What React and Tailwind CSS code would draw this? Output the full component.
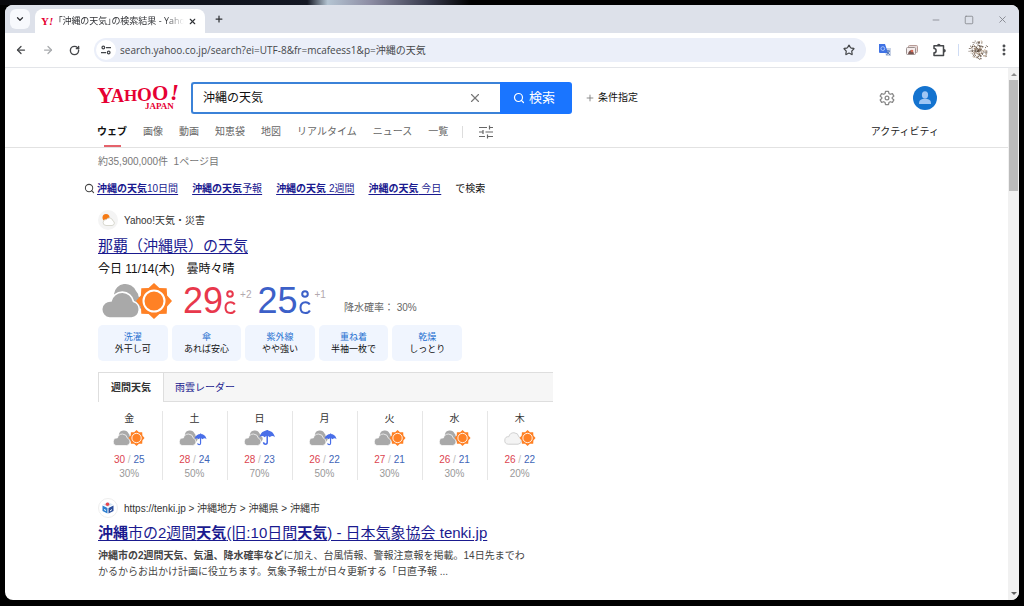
import React from "react";
import { ArrowLeft, ArrowRight, ChevronDown, EllipsisVertical, Minus, Plus, RotateCw, Search, Square, Star, X } from "lucide-react";

const navItems = ["画像", "動画", "知恵袋", "地図", "リアルタイム", "ニュース", "一覧"];

const suggestions = ["10日間", "予報", " 2週間", " 今日"];

const indexes = [
  ["洗濯", "外干し可"],
  ["傘", "あれば安心"],
  ["紫外線", "やや強い"],
  ["重ね着", "半袖一枚で"],
  ["乾燥", "しっとり"],
];

const week = [
  { day: "金", icon: "sun", hi: 30, lo: 25, rain: "30%" },
  { day: "土", icon: "drizzle", hi: 28, lo: 24, rain: "50%" },
  { day: "日", icon: "rain", hi: 28, lo: 23, rain: "70%" },
  { day: "月", icon: "drizzle", hi: 26, lo: 22, rain: "50%" },
  { day: "火", icon: "sun", hi: 27, lo: 21, rain: "30%" },
  { day: "水", icon: "sun", hi: 26, lo: 21, rain: "30%" },
  { day: "木", icon: "fair", hi: 26, lo: 22, rain: "20%" },
];

const sunPoints = Array.from({ length: 16 }, (_, i) => {
  const r = i % 2 ? 14.2 : 18;
  const a = (i * Math.PI) / 8;
  return `${(52 + r * Math.cos(a)).toFixed(1)},${(18 + r * Math.sin(a)).toFixed(1)}`;
}).join(" ");

// Deterministic noise, so that the avatar speckles are the same on every render.
const noise = (n) => {
  const v = Math.sin(n * 127.1) * 43758.5453;
  return v - Math.floor(v);
};

function Umbrella({ transform }) {
  return (
    <g transform={transform}>
      <path d="M0 14C2 5 8 1 15 1s13 4 15 13c-3-3-7-3-10 0-3-3-7-3-10 0-3-3-7-3-10 0z" fill="#4a6fe8" />
      <path d="M15 0v24c0 5-7 5-7 0" fill="none" stroke="#4a6fe8" strokeWidth="3" />
    </g>
  );
}

function WeatherIcon({ type, className }) {
  const fair = type === "fair";
  return (
    <svg viewBox="0 0 70 36" className={className} aria-hidden="true">
      {!fair && <path d="M20 27h15a7 7 0 0 0 1.5-13.5A9 9 0 0 0 34 8 11.5 11.5 0 0 0 12 11z" fill="#a9a9a9" />}
      <path
        d="M7.500 35h22a8.500 8.500 0 0 0 2-16.500A11.500 11.500 0 0 0 9 18 8.500 8.500 0 0 0 7.500 35z"
        fill={fair ? "#f4f4f4" : "#a9a9a9"}
        stroke={fair ? "#cccccc" : "#ffffff"}
        strokeWidth={fair ? 2 : 1.6}
        transform={fair ? "translate(1 -3)" : undefined}
      />
      {(type === "sun" || fair) && (
        <>
          <polygon points={sunPoints} fill="#ff8125" />
          <circle cx="52" cy="18" r="10.500" fill="none" stroke="#fff" strokeWidth="2" />
        </>
      )}
      {type === "drizzle" && <Umbrella transform="translate(34 8) scale(.9)" />}
      {type === "rain" && <Umbrella transform="translate(34 0) scale(1.150)" />}
    </svg>
  );
}

function YahooLogo() {
  return (
    <svg viewBox="0 0 82 26" className="h-[26px] w-[82px] overflow-visible" role="img" aria-label="Yahoo! JAPAN" fill="#e60033" fontFamily="Liberation Serif, serif" fontWeight="bold">
      <text y="19" fontSize="23">
        <tspan x="0">Y</tspan>
        <tspan x="14" y="18" fontSize="18">A</tspan>
        <tspan x="27" y="17" fontSize="17">H</tspan>
        <tspan x="40" y="17" fontSize="19">O</tspan>
        <tspan x="55" y="16" fontSize="21">O</tspan>
        <tspan x="73" y="16" fontSize="23" fontStyle="italic">!</tspan>
        <tspan x="48" y="25" fontSize="9">JAPAN</tspan>
      </text>
    </svg>
  );
}

function SlidersIcon({ className, viewBox = "0 0 14 14", children }) {
  return (
    <svg viewBox={viewBox} className={className} fill="none" stroke="currentColor" aria-hidden="true">
      {children}
    </svg>
  );
}

function BrowserTabs() {
  return (
    <div className="flex h-7 items-end bg-[#dde1ea] pl-[5px] text-[#303236]">
      <button aria-label="タブを検索" className="mb-1 grid size-5 place-items-center rounded-md bg-[#f7f9fd]">
        <ChevronDown className="size-[10px]" strokeWidth={3} />
      </button>
      <div className="ml-[5px] flex h-6 w-[170px] items-center rounded-t-lg bg-white pl-[6px] pr-2">
        <svg viewBox="0 0 12 10" className="h-[10px] w-3 shrink-0 overflow-visible" fill="#e60033" fontFamily="Liberation Serif, serif" fontWeight="bold" aria-hidden="true">
          <text x="0" y="9" fontSize="11">Y<tspan fontStyle="italic">!</tspan></text>
        </svg>
        <span className="ml-[5px] min-w-0 flex-1 overflow-hidden whitespace-nowrap font-['Open_Sans','Noto_Sans_CJK_JP',sans-serif] text-[9px] [font-feature-settings:'palt'] [mask-image:linear-gradient(to_right,black_86%,transparent)]">
          「沖縄の天気」の検索結果 - Yahoo!検索
        </span>
        <button aria-label="タブを閉じる" className="ml-1 shrink-0"><X className="size-[9px]" strokeWidth={3} /></button>
      </div>
      <button aria-label="新しいタブ" className="mb-[9px] ml-[9px]"><Plus className="size-[10px]" strokeWidth={3} /></button>
      <div className="mb-2 ml-auto mr-[11px] flex gap-[23px] text-[#85888e]">
        <button aria-label="最小化"><Minus className="size-[10px]" /></button>
        <button aria-label="最大化"><Square className="size-[10px]" /></button>
        <button aria-label="閉じる"><X className="size-[11px]" /></button>
      </div>
    </div>
  );
}

function Toolbar() {
  return (
    <div className="flex h-[35px] items-center border-b border-[#e3e5e9] bg-white pl-[10px] pr-2 text-[#45474a]">
      <div className="flex w-[79px] shrink-0 gap-[15px]">
        <button aria-label="戻る"><ArrowLeft className="size-3" strokeWidth={2.5} /></button>
        <button aria-label="進む" className="text-[#a9abae]"><ArrowRight className="size-3" strokeWidth={2.5} /></button>
        <button aria-label="再読み込み"><RotateCw className="size-[11px]" strokeWidth={3} /></button>
      </div>
      <div className="flex h-6 flex-1 items-center rounded-full bg-[#ebeff9] pl-[2px] pr-[11px]">
        <button aria-label="サイト情報" className="grid size-5 place-items-center rounded-full bg-white">
          <SlidersIcon className="size-[10px]" viewBox="0 0 12 12">
            <g strokeWidth="1.500">
              <circle cx="2.800" cy="3" r="1.600" /><path d="M6 3h6M0 9h6" /><circle cx="9.200" cy="9" r="1.600" />
            </g>
          </SlidersIcon>
        </button>
        <input aria-label="アドレス" defaultValue="search.yahoo.co.jp/search?ei=UTF-8&fr=mcafeess1&p=沖縄の天気" className="ml-1 min-w-0 flex-1 bg-transparent font-['Open_Sans','Noto_Sans_CJK_JP',sans-serif] text-[10px] outline-none" />
        <button aria-label="ブックマーク"><Star className="size-3" strokeWidth={2.4} /></button>
      </div>
      <div className="ml-[13px] flex items-center">
        <button aria-label="翻訳">
          <svg viewBox="0 0 12 12" className="size-3">
            <path d="M5 4h7v8H7z" fill="#c9d3e6" />
            <path d="M0 0h6l3 9H1a1 1 0 0 1-1-1z" fill="#3f72e4" />
            <circle cx="3.800" cy="4.600" r="1.900" fill="none" stroke="#a9c5fa" strokeWidth="1" />
            <path d="M7 7h4M9 6v1m1.500 0L7.500 11M8 8l3 3" stroke="#4b72b8" strokeWidth=".9" />
          </svg>
        </button>
        <button aria-label="画像検索" className="ml-[15px]">
          <svg viewBox="0 0 12 12" className="size-3">
            <rect x="2.500" y="1.500" width="9" height="7" rx="1" fill="#e9dcda" stroke="#b79b96" />
            <rect x=".5" y="3.500" width="9" height="7" rx="1" fill="#f6eeee" stroke="#9c918f" />
            <path d="M2 10c1-5 5-5 6 0z" fill="#775450" />
            <circle cx="6" cy="7" r="1.300" fill="#d46753" />
          </svg>
        </button>
        <button aria-label="拡張機能" className="ml-[14px]">
          <svg viewBox="0 0 14 14" className="size-[14px]" fill="none" stroke="currentColor" strokeWidth="1.500" strokeLinejoin="round">
            <path d="M2 2.800h9.500v9.700H2V9.800a2 2 0 0 0 0-4.200z" />
            <path d="M5 2.500a1.800 1.800 0 0 1 3.600 0zM12 6a1.800 1.800 0 0 1 0 3.600z" fill="currentColor" stroke="none" />
          </svg>
        </button>
        <span className="ml-3 h-3 w-px bg-[#cfdcf4]" />
        <button aria-label="プロフィール" className="ml-[9px]">
          <svg viewBox="0 0 20 20" className="size-5">
            {Array.from({ length: 190 }, (_, i) => {
              const r = noise(i + 1) * 10;
              const a = noise(i + 501) * Math.PI * 2;
              return <rect key={i} x={10 + r * Math.cos(a)} y={10 + r * Math.sin(a)} width={0.9} height={0.9} fill={i % 3 ? "#5b4a3c" : "#b9a189"} />;
            })}
          </svg>
        </button>
        <button aria-label="メニュー" className="ml-[9px]"><EllipsisVertical className="size-[14px]" strokeWidth={3} /></button>
      </div>
    </div>
  );
}

function SearchHeader() {
  return (
    <header className="flex justify-between border-b border-[#e2e2e2] pl-[92px] pr-[69px] pt-[14px]">
      <div>
        <div className="flex h-[31px] items-center">
          <a href="#home" className="-mt-px"><YahooLogo /></a>
          <form className="ml-3 flex h-8 w-[381px]" onSubmit={(e) => e.preventDefault()}>
            <div className="flex flex-1 items-center rounded-l-[3px] border-2 border-r-0 border-[#3b82d8] pl-[10px] pr-[18px]">
              <input aria-label="検索キーワード" defaultValue="沖縄の天気" className="min-w-0 flex-1 text-[12px] text-[#111] outline-none" />
              <button type="button" aria-label="クリア" className="text-[#777]"><X className="size-[14px]" strokeWidth={2} /></button>
            </div>
            <button type="submit" className="flex w-[72px] items-center justify-center gap-1 rounded-r-[3px] bg-[#1a75ff] pr-1 text-[13px] text-white">
              <Search className="size-3" strokeWidth={2.4} />検索
            </button>
          </form>
          <button className="ml-[13px] flex items-center gap-[3px] text-[10px] text-[#111]">
            <Plus className="size-[10px] text-[#777]" strokeWidth={2} />条件指定
          </button>
        </div>
        <nav className="flex h-[34px] gap-4 text-[10px] leading-[38px] text-[#666]">
          <a href="#web" aria-current="page" className="flex flex-col items-center font-bold text-[#111]">
            <span className="h-8">ウェブ</span>
            <span className="h-0.5 w-[17px] bg-[#e5626b]" />
          </a>
          {navItems.map((item) => <a key={item} href="#search">{item}</a>)}
          <span className="-ml-0.5 mt-[13px] h-3 w-px bg-[#ddd]" />
          <button aria-label="検索ツール" className="h-[38px]">
            <SlidersIcon className="size-[14px]">
              <path d="M0 2.500h8M10.500 2.500H14M10.500 .5v4M0 7h4M6.500 7H14M4 5v4M0 11.500h6M8.500 11.500H14M8.500 9.500v4" strokeWidth="1.200" />
            </SlidersIcon>
          </button>
        </nav>
      </div>
      <div className="flex flex-col items-end">
        <div className="flex h-[31px] items-center gap-[18px] pr-0.5">
          <button aria-label="設定" className="text-[#888]">
            <svg viewBox="0 0 24 24" className="size-4" fill="none" stroke="currentColor" strokeWidth="1.900" strokeLinejoin="round">
              <path d="M9.800 2h4.400l.7 3.200 2 1.200 3.200-1 2.200 3.800-2.500 2.200v1.200l2.500 2.200-2.200 3.800-3.200-1-2 1.200-.7 3.200H9.800l-.7-3.200-2-1.200-3.200 1-2.200-3.800 2.500-2.200v-1.200L1.700 9.200l2.200-3.800 3.200 1 2-1.200z" />
              <circle cx="12" cy="12" r="2.800" />
            </svg>
          </button>
          <button aria-label="アカウント">
            <svg viewBox="0 0 24 24" className="size-6">
              <circle cx="12" cy="12" r="12" fill="#1473cf" />
              <ellipse cx="12" cy="9" rx="3.100" ry="3.700" fill="#9fc6f4" />
              <path d="M6 18c0-5 3-5 6-5s6 0 6 5z" fill="#9fc6f4" />
            </svg>
          </button>
        </div>
        <a href="#activity" className="h-[34px] text-[10px] leading-[38px] text-[#222]">アクティビティ</a>
      </div>
    </header>
  );
}

function Temperature({ value, diff, className }) {
  return (
    <div className={`flex h-9 items-center text-[36px] leading-9 ${className}`}>
      {value}
      <svg viewBox="0 0 12 26" className="ml-px mt-px h-[26px] w-3" fill="none" stroke="currentColor" strokeWidth="2" role="img" aria-label="度">
        <circle cx="6" cy="5" r="2.800" />
        <path d="M10.700 15.500C9.800 13.800 8.300 13.300 6.500 13.300 3.300 13.300 1.500 15.500 1.500 18.800s1.800 5.200 5 5.200c2 0 3.600-.8 4.400-2.500" />
      </svg>
      <span className="ml-1 self-start pt-1 text-[10px] leading-4 text-[#b3a9ae]">{diff}</span>
    </div>
  );
}

function WeatherResult() {
  return (
    <section>
      <div className="mt-[14px] flex h-5 items-center gap-[6px] text-[10px] text-[#333]">
        <span className="grid size-5 place-items-center rounded-full bg-[#f4f4f4]">
          <svg viewBox="0 0 14 14" className="size-[14px]" aria-hidden="true">
            <circle cx="5" cy="4.500" r="3.500" fill="#f57a14" />
            <path d="M5 12.500a3 3 0 0 1 .3-6 3.600 3.600 0 0 1 6.500 1.200A2.500 2.500 0 0 1 11 12.500z" fill="#fff" stroke="#cfcfc4" strokeWidth=".8" />
          </svg>
        </span>
        Yahoo!天気・災害
      </div>
      <h2 className="mt-1 h-6 text-[15px] leading-6 text-[#1a1a8f]"><a href="#naha" className="underline underline-offset-2">那覇（沖縄県）の天気</a></h2>
      <p className="mt-[3px] h-4 text-[12px] leading-4 text-[#111]">今日 11/14(木)　曇時々晴</p>

      <div className="mt-[6px] flex h-9">
        <WeatherIcon type="sun" className="ml-1 h-9 w-[70px]" />
        <Temperature value="29" diff="+2" className="ml-[11px] text-[#e8384c]" />
        <Temperature value="25" diff="+1" className="ml-[6px] text-[#3c60c8]" />
        <p className="ml-[18px] pt-[17px] text-[10px] leading-4 text-[#666]">降水確率： 30%</p>
      </div>

      <ul className="mt-[6px] grid w-[364px] grid-cols-5 gap-1 text-center text-[9px] leading-3">
        {indexes.map(([label, value]) => (
          <li key={label} className="rounded-[5px] bg-[#f0f5fe] py-[6px]">
            <a href="#index" className="block text-[#1f70d0]">{label}</a>
            <span className="block text-[#111]">{value}</span>
          </li>
        ))}
      </ul>

      <div role="tablist" className="mt-[11px] flex h-[30px] w-[455px] border-y border-[#dedede] bg-[#f6f6f6] text-[10px]">
        <button role="tab" aria-selected="true" className="-mb-px w-[66px] border-x border-[#dedede] bg-white font-bold text-[#333]">週間天気</button>
        <button role="tab" aria-selected="false" className="px-[11px] text-[#1a1a8f]">雨雲レーダー</button>
      </div>

      <table className="-ml-px mt-[9px] w-[455px] table-fixed border-collapse text-center text-[10px]">
        <thead>
          <tr className="divide-x divide-[#e6e6e6]">
            {week.map((d) => <th key={d.day} scope="col" className="h-4 font-normal leading-4 text-[#333]">{d.day}</th>)}
          </tr>
        </thead>
        <tbody>
          <tr className="divide-x divide-[#e6e6e6]">
            {week.map((d) => <td key={d.day} className="pb-[7px] pt-[3px]"><WeatherIcon type={d.icon} className="mx-auto h-4 w-8" /></td>)}
          </tr>
          <tr className="divide-x divide-[#e6e6e6]">
            {week.map((d) => (
              <td key={d.day} className="leading-[14px] text-[#bbb]">
                <span className="text-[#dc4450]">{d.hi}</span> / <span className="text-[#3f66b8]">{d.lo}</span>
              </td>
            ))}
          </tr>
          <tr className="divide-x divide-[#e6e6e6]">
            {week.map((d) => <td key={d.day} className="leading-[13px] text-[#999]">{d.rain}</td>)}
          </tr>
        </tbody>
      </table>
    </section>
  );
}

function TenkiResult() {
  return (
    <section className="mt-[18px] w-[455px]">
      <div className="flex h-5 items-center gap-[6px] text-[10px] text-[#333]">
        <span className="grid size-5 place-items-center rounded-full border border-[#eee]">
          <svg viewBox="0 0 14 14" className="size-[14px]" aria-hidden="true">
            <path d="M1.500 4.500 6.500 7v5.500l-5-2.500z" fill="#2d7fd0" />
            <path d="M12.500 4.500 7.500 7v5.500l5-2.500z" fill="#2b4e9c" />
            <path d="M2 3.500 7 1l5 2.500L7 6z" fill="#d6e6f6" />
            <circle cx="6.500" cy="3.300" r="1.800" fill="#e8464d" />
            <path d="M3 8.500l2 1M9 10l2-1.500" stroke="#fff" strokeWidth="1" />
          </svg>
        </span>
        https://tenki.jp &gt; 沖縄地方 &gt; 沖縄県 &gt; 沖縄市
      </div>
      <h2 className="mt-[3px] h-6 whitespace-nowrap text-[15px] leading-6 text-[#1a1a8f]">
        <a href="#tenki" className="underline underline-offset-2"><b>沖縄</b>市の2週間<b>天気</b>(旧:10日間<b>天気</b>) - 日本気象協会 tenki.jp</a>
      </h2>
      <p className="mt-[3px] whitespace-nowrap text-[10px] leading-4 text-[#444]">
        <b>沖縄市の2週間天気、気温、降水確率など</b>に加え、台風情報、警報注意報を掲載。14日先までわ<br />
        かるからお出かけ計画に役立ちます。気象予報士が日々更新する「日直予報 ...
      </p>
    </section>
  );
}

function Scrollbar() {
  return (
    <div className="flex w-[11px] shrink-0 flex-col items-center bg-[#f1f1f1]" aria-hidden="true">
      <svg viewBox="0 0 6 12" className="h-3 w-[6px]" fill="#8b8b8b"><path d="M0 8l3-3 3 3z" /></svg>
      <div className="h-[111px] w-[9px] bg-[#bcbcbc]" />
      <svg viewBox="0 0 6 12" className="mt-auto h-3 w-[6px]" fill="#606060"><path d="M0 4l3 3 3-3z" /></svg>
    </div>
  );
}

export default function App() {
  return (
    <div className="flex min-h-screen flex-col bg-black bg-[linear-gradient(to_right,#08080c_0%,#141824_30%,#b4c4d2_32%,#8f8fa6_36%,#35384a_42%,#000_46%)] bg-[length:100%_5px] bg-no-repeat px-[5px] pb-[6px] pt-[5px] font-['Liberation_Sans','Noto_Sans_CJK_JP',sans-serif]">
      <div className="flex flex-1 flex-col overflow-hidden rounded-lg bg-white">
        <BrowserTabs />
        <Toolbar />
        <div className="flex flex-1">
          <div className="min-w-0 flex-1">
            <SearchHeader />
            <main className="pb-4 pl-[93px]">
              <p className="mt-[6px] h-4 text-[10px] leading-4 text-[#777]">約35,900,000件&nbsp; 1ページ目</p>
              <div className="-ml-[14px] mt-[10px] flex h-4 items-center text-[10px] text-[#111]">
                <Search className="size-[11px] text-[#444]" strokeWidth={2.2} />
                <div className="ml-0.5 flex gap-[14px]">
                  {suggestions.map((suffix) => (
                    <a key={suffix} href="#suggest" className="whitespace-pre text-[#1a1a8f] underline underline-offset-2"><b>沖縄の天気</b>{suffix}</a>
                  ))}
                  <span>で検索</span>
                </div>
              </div>
              <WeatherResult />
              <TenkiResult />
            </main>
          </div>
          <Scrollbar />
        </div>
      </div>
    </div>
  );
}
